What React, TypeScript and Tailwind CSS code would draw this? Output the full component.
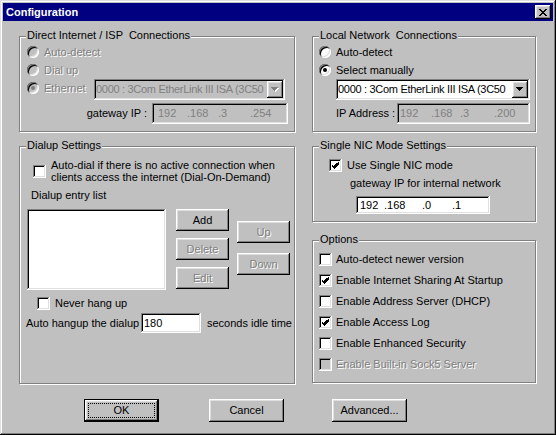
const raised = "shadow-[inset_-1px_-1px_#000,inset_1px_1px_#fff,inset_-2px_-2px_#808080,inset_2px_2px_#dfdfdf]";
const sunken = "shadow-[inset_-1px_-1px_#fff,inset_1px_1px_#808080,inset_-2px_-2px_#dfdfdf,inset_2px_2px_#000]";
const dis = "text-[#808080] [text-shadow:1px_1px_0_#fff]";

function Radio({ checked, disabled }: { checked?: boolean; disabled?: boolean }) {
  return (
    <span
      className={`flex w-[12px] h-[12px] shrink-0 items-center justify-center rounded-full shadow-[inset_1px_1px_#808080,inset_-1px_-1px_#fff,inset_2px_2px_#000,inset_-2px_-2px_#dfdfdf] ${
        disabled ? "bg-[#c0c0c0]" : "bg-white"
      }`}
    >
      {checked && <span className={`w-[4px] h-[4px] rounded-full ${disabled ? "bg-[#808080]" : "bg-black"}`} />}
    </span>
  );
}

function Check({ checked, disabled }: { checked?: boolean; disabled?: boolean }) {
  return (
    <span className={`flex w-[13px] h-[13px] shrink-0 items-center justify-center ${sunken} ${disabled ? "bg-[#c0c0c0]" : "bg-white"}`}>
      {checked && (
        <svg width="7" height="7" viewBox="0 0 7 7" shapeRendering="crispEdges">
          <path d="M6 0h1v3h-1v1h-1v1h-1v1h-1v1h-1v-1h-1v-1h-1v-1h-1v-2h1v1h1v1h1v-1h1v-1h1v-1h1z" fill="#000" />
        </svg>
      )}
    </span>
  );
}

function Arrow({ disabled }: { disabled?: boolean }) {
  const d = "M0 0h7v1h-1v1h-1v1h-1v1h-1v-1h-1v-1h-1v-1h-1z";
  return (
    <svg width="8" height="5" viewBox="0 0 8 5" shapeRendering="crispEdges">
      {disabled && <path d={d} fill="#fff" transform="translate(1 1)" />}
      <path d={d} fill={disabled ? "#808080" : "#000"} />
    </svg>
  );
}

function Combo({ text, disabled, className }: { text: string; disabled?: boolean; className: string }) {
  return (
    <div className={`flex h-[21px] items-center p-[2px] ${sunken} ${disabled ? "bg-[#c0c0c0] text-[#808080]" : "bg-white text-black"} ${className}`}>
      <span className="flex-1 whitespace-nowrap tracking-[-0.3px]">{text}</span>
      <span className={`flex w-[16px] h-[17px] shrink-0 items-center justify-center bg-[#c0c0c0] ${raised}`}>
        <Arrow disabled={disabled} />
      </span>
    </div>
  );
}

function Btn({ label, disabled, className }: { label: string; disabled?: boolean; className: string }) {
  return (
    <div className={`flex items-center justify-center bg-[#c0c0c0] ${raised} ${disabled ? dis : "text-black"} ${className}`}>
      {label}
    </div>
  );
}

function Group({ title, className, children }: { title: string; className: string; children: React.ReactNode }) {
  return (
    <div className={`relative border border-[#808080] shadow-[1px_1px_0_#fff,inset_1px_1px_0_#fff] ${className}`}>
      <span className="absolute left-[6px] top-[-8px] bg-[#c0c0c0] px-[1px] whitespace-pre">{title}</span>
      {children}
    </div>
  );
}

export default function App() {
  return (
    <div className="w-[556px] h-[435px] bg-[#c0c0c0] p-[3px] font-['Liberation_Sans',Arial,sans-serif] text-[11px] leading-[13px] text-black shadow-[inset_-1px_-1px_#000,inset_1px_1px_#dfdfdf,inset_-2px_-2px_#808080,inset_2px_2px_#fff]">
      <div className="flex h-[18px] items-center justify-between bg-[#000080] pl-[3px]">
        <span className="font-bold text-white">Configuration</span>
        <div className={`mr-[2px] flex w-[16px] h-[14px] items-center justify-center bg-[#c0c0c0] ${raised}`}>
          <svg width="8" height="7" viewBox="0 0 8 7" shapeRendering="crispEdges">
            <path
              d="M0 0h2v1h-2z M6 0h2v1h-2z M1 1h2v1h-2z M5 1h2v1h-2z M2 2h4v1h-4z M3 3h2v1h-2z M2 4h4v1h-4z M1 5h2v1h-2z M5 5h2v1h-2z M0 6h2v1h-2z M6 6h2v1h-2z"
              fill="#000"
            />
          </svg>
        </div>
      </div>

      <div className="flex gap-[17px] pl-[16px] pt-[15px]">
        {/* left column */}
        <div className="flex w-[276px] flex-col">
          <Group title="Direct Internet / ISP  Connections" className="h-[96px] pl-[7px] pt-[6px]">
            <div className={`flex h-[18px] items-center gap-[5px] ${dis}`}>
              <Radio disabled />
              <span>Auto-detect</span>
            </div>
            <div className={`flex h-[18px] items-center gap-[5px] ${dis}`}>
              <Radio disabled />
              <span>Dial up</span>
            </div>
            <div className="flex h-[21px]">
              <div className={`flex h-[18px] w-[67px] items-center gap-[5px] ${dis}`}>
                <Radio checked disabled />
                <span>Ethernet</span>
              </div>
              <Combo text="0000 : 3Com EtherLink III ISA (3C50" disabled className="w-[191px]" />
            </div>
            <div className="mt-[3px] flex h-[21px] items-center">
              <span className="w-[125px] pr-[5px] text-right">gateway IP :</span>
              <div className={`flex h-[21px] w-[136px] items-center bg-[#c0c0c0] pl-[6px] text-[#808080] ${sunken}`}>
                <span className="w-[29px]">192</span>
                <span className="w-[31px]">.168</span>
                <span className="w-[32px]">.3</span>
                <span>.254</span>
              </div>
            </div>
          </Group>

          <Group title="Dialup Settings" className="mt-[14px] h-[238px]">
            <div className="ml-[13px] mt-[12px] flex items-center gap-[5px]">
              <Check />
              <span className="leading-[12px]">
                Auto-dial if there is no active connection when
                <br />
                clients access the internet (Dial-On-Demand)
              </span>
            </div>
            <div className="ml-[11px] mt-[6px]">Dialup entry list</div>
            <div className="ml-[7px] mt-[7px] flex">
              <div className={`h-[81px] w-[139px] bg-white ${sunken}`} />
              <div className="ml-[10px] flex flex-col gap-[7px]">
                <Btn label="Add" className="h-[22px] w-[53px]" />
                <Btn label="Delete" disabled className="h-[22px] w-[53px]" />
                <Btn label="Edit" disabled className="h-[22px] w-[53px]" />
              </div>
              <div className="ml-[8px] mt-[12px] flex flex-col gap-[10px]">
                <Btn label="Up" disabled className="h-[22px] w-[53px]" />
                <Btn label="Down" disabled className="h-[22px] w-[53px]" />
              </div>
            </div>
            <div className="ml-[17px] mt-[7px] flex items-center gap-[5px]">
              <Check />
              <span>Never hang up</span>
            </div>
            <div className="ml-[6px] mt-[3px] flex h-[20px] items-center">
              <span className="w-[115px] whitespace-nowrap">Auto hangup the dialup</span>
              <div className={`flex h-[20px] w-[60px] items-center bg-white pl-[3px] ${sunken}`}>180</div>
              <span className="ml-[6px]">seconds idle time</span>
            </div>
          </Group>
        </div>

        {/* right column */}
        <div className="flex w-[224px] flex-col">
          <Group title="Local Network  Connections" className="h-[96px] pl-[6px] pt-[6px]">
            <div className="flex h-[18px] items-center gap-[5px]">
              <Radio />
              <span>Auto-detect</span>
            </div>
            <div className="flex h-[18px] items-center gap-[5px]">
              <Radio checked />
              <span>Select manually</span>
            </div>
            <Combo text="0000 : 3Com EtherLink III ISA (3C50" className="ml-[17px] w-[194px]" />
            <div className="ml-[17px] mt-[3px] flex h-[21px] items-center">
              <span className="w-[61px]">IP Address :</span>
              <div className={`flex h-[21px] w-[133px] items-center bg-[#c0c0c0] pl-[3px] text-[#808080] ${sunken}`}>
                <span className="w-[31px]">192</span>
                <span className="w-[29px]">.168</span>
                <span className="w-[34px]">.3</span>
                <span>.200</span>
              </div>
            </div>
          </Group>

          <Group title="Single NIC Mode Settings" className="mt-[14px] h-[76px]">
            <div className="ml-[16px] mt-[12px] flex h-[13px] items-center gap-[5px]">
              <Check checked />
              <span>Use Single NIC mode</span>
            </div>
            <div className="ml-[37px] mt-[5px]">gateway IP for internal network</div>
            <div className={`ml-[43px] mt-[6px] flex h-[18px] w-[134px] items-center bg-white pl-[4px] ${sunken}`}>
              <span className="w-[24px]">192</span>
              <span className="w-[38px]">.168</span>
              <span className="w-[30px]">.0</span>
              <span>.1</span>
            </div>
          </Group>

          <Group title="Options" className="mt-[18px] h-[143px] pl-[6px] pt-[8px]">
            {[
              ["Auto-detect newer version", false, false],
              ["Enable Internet Sharing At Startup", true, false],
              ["Enable Address Server (DHCP)", false, false],
              ["Enable Access Log", true, false],
              ["Enable Enhanced Security", false, false],
              ["Enable Built-in Sock5 Server", false, true],
            ].map(([label, on, off]) => (
              <div key={label as string} className="flex h-[21px] items-center gap-[4px]">
                <Check checked={on as boolean} disabled={off as boolean} />
                <span className={off ? dis : ""}>{label as string}</span>
              </div>
            ))}
          </Group>
        </div>
      </div>

      <div className="ml-[81px] mt-[15px] flex">
        <div className="h-[23px] w-[75px] border border-black">
          <div className={`flex h-full w-full items-center justify-center bg-[#c0c0c0] p-[3px] ${raised}`}>
            <div className="flex h-full w-full items-center justify-center border border-dotted border-black">OK</div>
          </div>
        </div>
        <Btn label="Cancel" className="ml-[50px] h-[23px] w-[75px]" />
        <Btn label="Advanced..." className="ml-[48px] h-[23px] w-[75px]" />
      </div>
    </div>
  );
}
